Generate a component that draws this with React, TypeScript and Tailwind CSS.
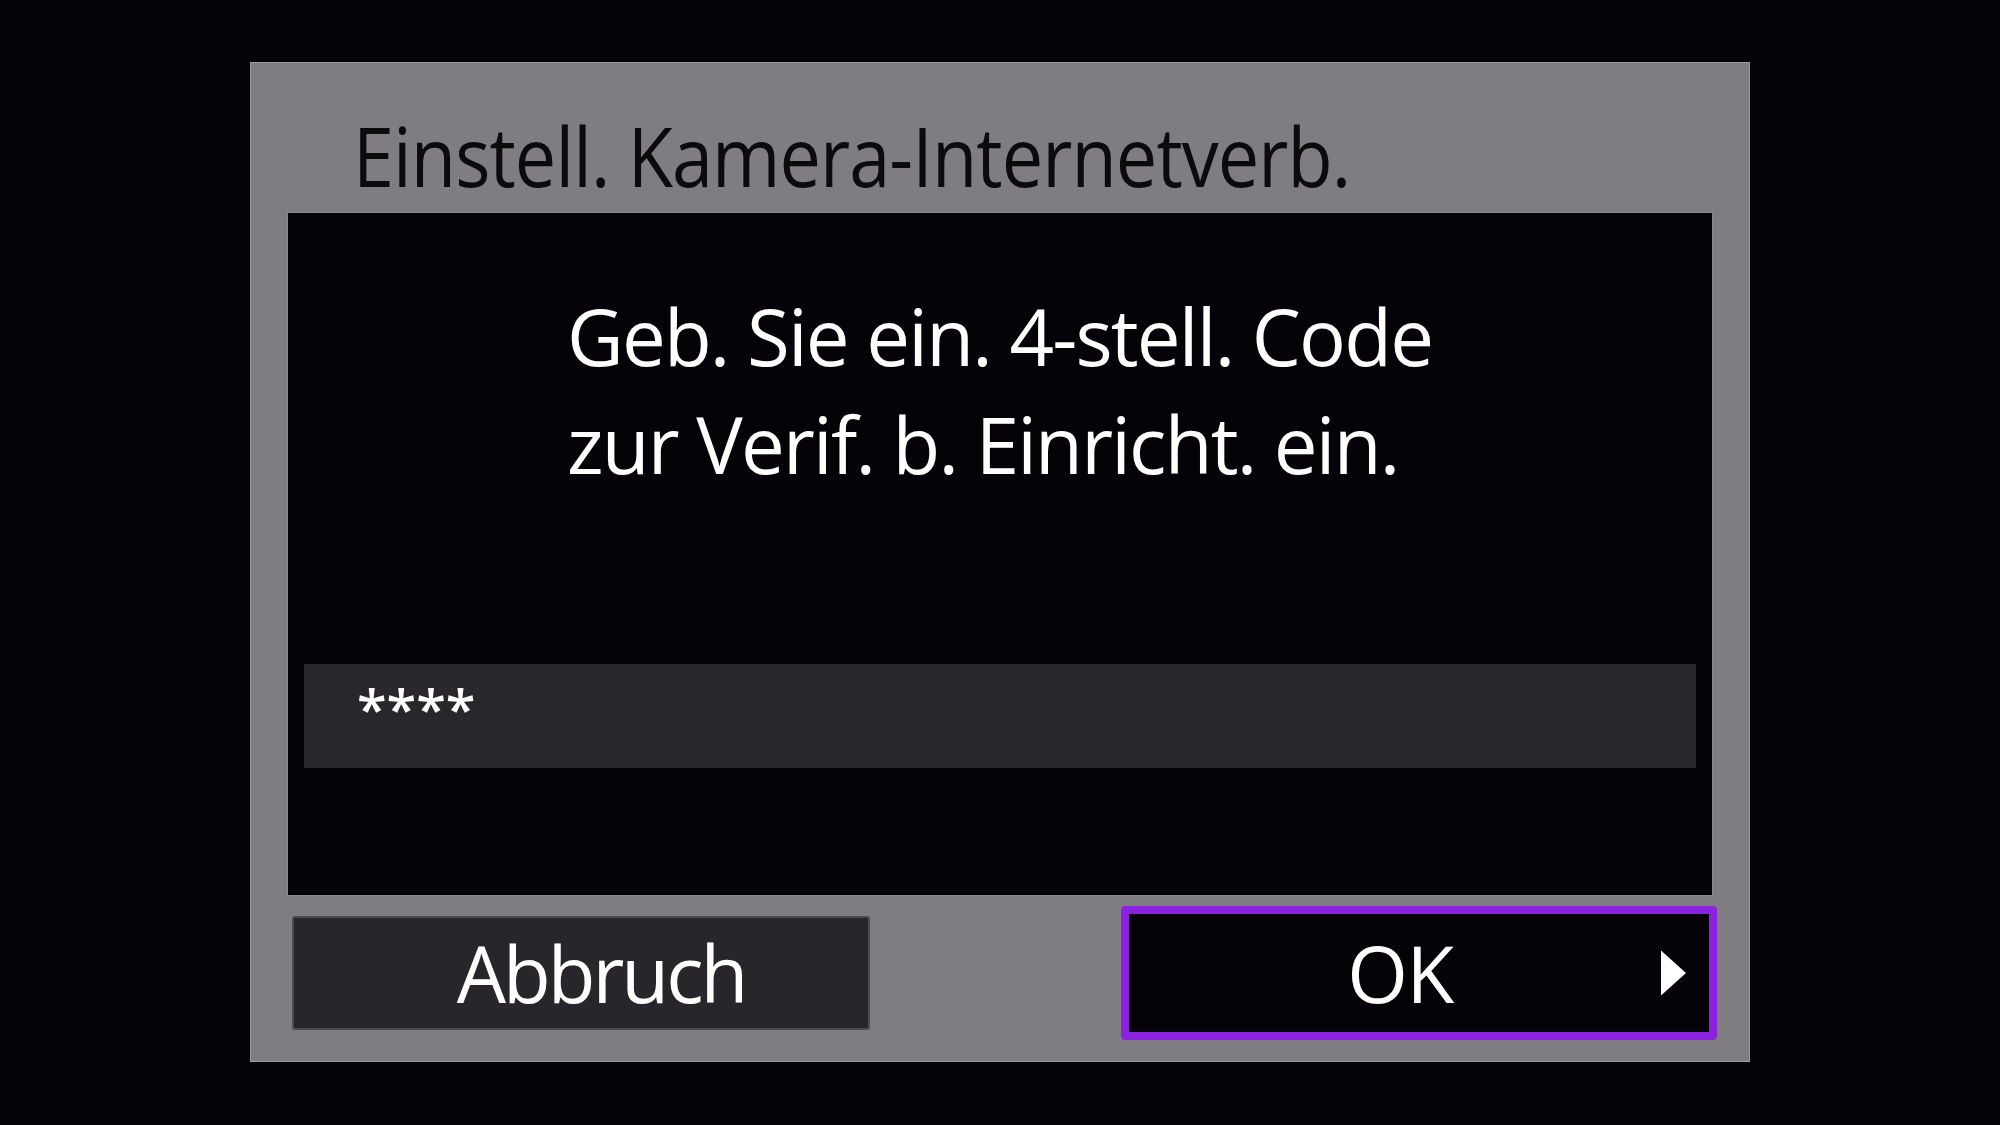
import React from "react";

export default function App() {
  return (
    <div
      className="w-[2000px] h-[1125px] bg-[#060409] pt-[62px] pl-[250px]"
      style={{ fontFamily: '"Open Sans", "Noto Sans", sans-serif' }}
    >
      <div className="w-[1500px] h-[1000px] bg-[#7f7d81] border border-[#9e9ca0] flex flex-col px-[36px]">
        <div className="h-[149px] pt-[51px] pl-[66px]">
          <div className="text-[82px] leading-none text-[#0b0a0d] whitespace-nowrap tracking-[-1px] origin-left scale-x-[0.9]">
            Einstell. Kamera-Internetverb.
          </div>
        </div>
        <div className="h-[684px] bg-[#050308] border border-[#8a888c] flex flex-col">
          <div className="pt-[69px] pl-[279px] text-white text-[78px] leading-[108px] whitespace-nowrap tracking-[-1.8px]">
            <div>Geb. Sie ein. 4-stell. Code</div>
            <div>zur Verif. b. Einricht. ein.</div>
          </div>
          <div className="mt-[166px] mx-[16px] h-[104px] bg-[#29272b] pl-[53px] pt-[17px]">
            <div className="text-white text-[54px] leading-none font-semibold tracking-[0px]">****</div>
          </div>
        </div>
        <div className="flex items-center h-[158px] pb-[14px] pt-[10px]">
          <div className="shrink-0 ml-[5px] w-[578px] h-[114px] bg-[#28262a] border-2 border-[#4d4b4f] rounded-[3px] flex items-center justify-center pl-[40px]">
            <span className="text-white text-[78px] leading-none tracking-[-3px]">Abbruch</span>
          </div>
          <div className="shrink-0 relative ml-[251px] w-[596px] h-[134px] bg-[#050308] border-[8px] border-[#8b22e0] rounded-[4px] flex items-center justify-center pr-[38px]">
            <span className="text-white text-[78px] leading-none tracking-[-1.5px]">OK</span>
            <svg
              className="absolute right-[23px] top-1/2 -translate-y-1/2"
              width="25"
              height="45"
              viewBox="0 0 25 45"
            >
              <polygon points="0,0 25,22.5 0,45" fill="#ffffff" />
            </svg>
          </div>
        </div>
      </div>
    </div>
  );
}
